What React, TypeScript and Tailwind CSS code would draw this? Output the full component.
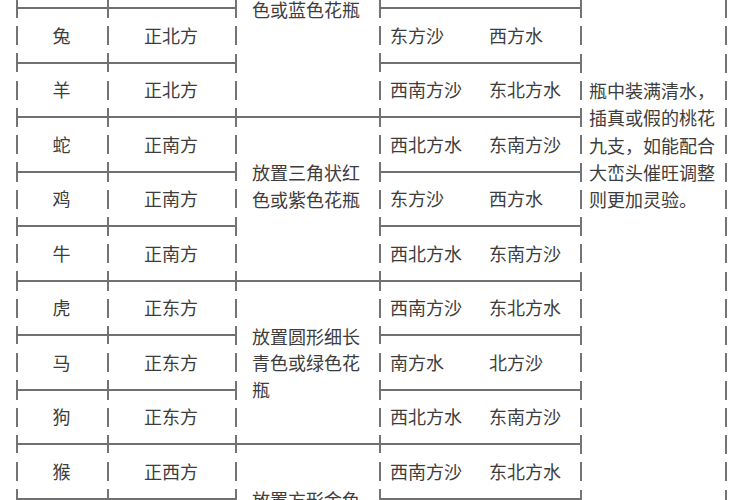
const dash =
  "bg-no-repeat bg-origin-border bg-[length:2px_100%] bg-[repeating-linear-gradient(to_bottom,#747474_0_10.5px,transparent_10.5px_18.75px,#747474_18.75px_27.25px)]";
const cell = `border-t-2 border-[#707070] ${dash}`;

type Row = { animal: string; dir: string; sand: [string, string] };

// first and last rows sit outside the frame, so they stay blank
const rows: Row[] = [
  { animal: "", dir: "", sand: ["", ""] },
  { animal: "兔", dir: "正北方", sand: ["东方沙", "西方水"] },
  { animal: "羊", dir: "正北方", sand: ["西南方沙", "东北方水"] },
  { animal: "蛇", dir: "正南方", sand: ["西北方水", "东南方沙"] },
  { animal: "鸡", dir: "正南方", sand: ["东方沙", "西方水"] },
  { animal: "牛", dir: "正南方", sand: ["西北方水", "东南方沙"] },
  { animal: "虎", dir: "正东方", sand: ["西南方沙", "东北方水"] },
  { animal: "马", dir: "正东方", sand: ["南方水", "北方沙"] },
  { animal: "狗", dir: "正东方", sand: ["西北方水", "东南方沙"] },
  { animal: "猴", dir: "正西方", sand: ["西南方沙", "东北方水"] },
  { animal: "", dir: "", sand: ["", ""] },
  { animal: "", dir: "", sand: ["", ""] },
];

// vase text, keyed by the row where each group starts
const vases: Record<number, { lines: string[]; pad: string }> = {
  0: { lines: ["", "色或蓝色花瓶"], pad: "pt-[15px]" },
  3: { lines: ["放置三角状红", "色或紫色花瓶"], pad: "pt-[41px]" },
  6: { lines: ["放置圆形细长", "青色或绿色花", "瓶"], pad: "pt-[41px]" },
  9: { lines: ["放置方形金色"], pad: "pt-[41px]" },
};

const note = ["瓶中装满清水，", "插真或假的桃花", "九支，如能配合", "大峦头催旺调整", "则更加灵验。"];

export default function App() {
  return (
    <div className="w-[750px] h-[500px] overflow-hidden bg-white text-[18px] text-[#3d3d3d] font-['Noto_Sans_CJK_SC','Noto_Sans',sans-serif]">
      <div className="mt-[-47.5px] pl-[16px] grid grid-cols-[91px_128px_144px_201px_145px_1fr] grid-rows-[repeat(12,54.5px)]">
        {rows.map((r, i) => (
          <Cells key={i} row={r} index={i} />
        ))}
      </div>
    </div>
  );
}

function Cells({ row, index }: { row: Row; index: number }) {
  const vase = vases[index];
  return (
    <>
      <div className={`${cell} flex items-center justify-center`}>{row.animal}</div>
      <div className={`${cell} flex items-center justify-center`}>{row.dir}</div>
      {vase && (
        <div className={`${cell} row-span-3 pl-[17px] leading-[26.5px] ${vase.pad}`}>
          {vase.lines.map((l, i) => (
            <div key={i} className="h-[26.5px]">{l}</div>
          ))}
        </div>
      )}
      <div className={`${cell} flex items-center pl-[11px]`}>
        <span className="w-[99px]">{row.sand[0]}</span>
        <span>{row.sand[1]}</span>
      </div>
      {index === 0 && (
        <>
          <div className={`${dash} row-span-12 pl-[9px] pt-[124.5px] leading-[27.3px]`}>
            {note.map((l) => (
              <div key={l}>{l}</div>
            ))}
          </div>
          <div className={`${dash} row-span-12`} />
        </>
      )}
    </>
  );
}
